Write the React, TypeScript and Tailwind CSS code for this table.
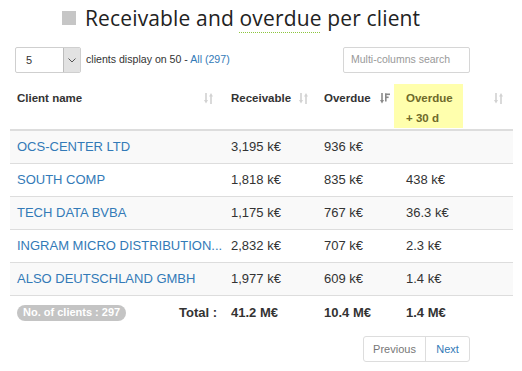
import React from 'react';

const rows = [
  { name: 'OCS-CENTER LTD', rec: '3,195 k€', over: '936 k€', over30: '' },
  { name: 'SOUTH COMP', rec: '1,818 k€', over: '835 k€', over30: '438 k€' },
  { name: 'TECH DATA BVBA', rec: '1,175 k€', over: '767 k€', over30: '36.3 k€' },
  { name: 'INGRAM MICRO DISTRIBUTION...', rec: '2,832 k€', over: '707 k€', over30: '2.3 k€' },
  { name: 'ALSO DEUTSCHLAND GMBH', rec: '1,977 k€', over: '609 k€', over30: '1.4 k€' },
];

// two arrows, down on the left and up on the right
const SortIcon = () => (
  <svg width="9" height="11" viewBox="0 0 9 11" className="mt-[5px] shrink-0">
    <g fill="#d2d2d2">
      <rect x="1.2" y="0" width="1.6" height="8" />
      <path d="M0 7 L4 7 L2 10.5 Z" />
      <rect x="6.2" y="2.5" width="1.6" height="8.5" />
      <path d="M5 3.5 L9 3.5 L7 0 Z" />
    </g>
  </svg>
);

const SortActiveIcon = () => (
  <svg width="10" height="11" viewBox="0 0 10 11" className="mt-[5px] shrink-0">
    <g fill="#8a8a8a">
      <rect x="1.2" y="0" width="1.6" height="8" />
      <path d="M0 7 L4 7 L2 10.5 Z" />
      <rect x="5" y="0.5" width="5" height="1.6" />
      <rect x="5" y="3.5" width="3.6" height="1.6" />
      <rect x="5" y="0.5" width="1.6" height="8" />
    </g>
  </svg>
);

const grid = 'grid grid-cols-[214px_93px_82px_114px]';

export default function App() {
  return (
    <div className="w-[522px] h-[371px] bg-white text-[#333] font-['Liberation_Sans',Arial,sans-serif] overflow-hidden">
      {/* title */}
      <div className="h-[36px] flex items-center pl-[62px] gap-[9px]">
        <div className="w-[14px] h-[14px] bg-[#c6c6c6]" />
        <h1 className="font-['Open_Sans',sans-serif] text-[21px] leading-none text-[#222] tracking-[0.15px]">
          Receivable and{' '}
          <span className="underline decoration-dotted decoration-[#8cc63f] decoration-1 underline-offset-[6px]">overdue</span> per client
        </h1>
      </div>

      {/* controls */}
      <div className="mt-[11px] flex items-center justify-between pl-[15px] w-[470px]">
        <div className="flex items-center">
          <div className="flex w-[66px] h-[26px] border border-[#cfcfcf] rounded-[2px] overflow-hidden">
            <div className="flex-1 flex items-center pl-[10px] text-[11px] text-[#333]">5</div>
            <div className="w-[17px] bg-[#e2e2e2] border-l border-[#bdbdbd] flex items-center justify-center">
              <svg width="8" height="5" viewBox="0 0 8 5">
                <path d="M0.5 0.5 L4 4 L7.5 0.5" fill="none" stroke="#555" strokeWidth="1" />
              </svg>
            </div>
          </div>
          <span className="ml-[5px] text-[10.6px] text-[#333]">
            clients display on 50 - <span className="text-[#337ab7]">All (297)</span>
          </span>
        </div>
        <div className="w-[127px] h-[26px] border border-[#d6d6d6] rounded-[2px] flex items-center pl-[7px] text-[10.5px] text-[#999]">
          Multi-columns search
        </div>
      </div>

      {/* table */}
      <div className="mt-[7px] ml-[10px] w-[503px]">
        <div className={`${grid} h-[51px] border-b-2 border-[#dddddd] text-[11.5px] font-bold leading-[20px]`}>
          <div className="flex justify-between items-start pt-[8px] pl-[7px] pr-[11px]">
            <span>Client name</span>
            <SortIcon />
          </div>
          <div className="flex justify-between items-start pt-[8px] pl-[7px] pr-[9px]">
            <span>Receivable</span>
            <SortIcon />
          </div>
          <div className="flex justify-between items-start pt-[8px] pl-[7px] pr-[9px]">
            <span>Overdue</span>
            <SortActiveIcon />
          </div>
          <div className="flex justify-between items-start pt-[4px] pr-[10px]">
            <div className="-ml-[5px] w-[69px] h-[44px] bg-[#ffffad] pt-[4px] pl-[12px] text-[#6e6a2a]">
              <div>Overdue</div>
              <div>+ 30 d</div>
            </div>
            <div className="pt-[4px]">
              <SortIcon />
            </div>
          </div>
        </div>

        {rows.map((r, i) => (
          <div
            key={r.name}
            className={`${grid} h-[33px] border-b border-[#dddddd] items-center text-[13px] ${i % 2 === 0 ? 'bg-[#f9f9f9]' : 'bg-white'}`}
          >
            <div className="pl-[7px] text-[#337ab7] whitespace-nowrap">{r.name}</div>
            <div className="pl-[7px]">{r.rec}</div>
            <div className="pl-[7px]">{r.over}</div>
            <div className="pl-[7px]">{r.over30}</div>
          </div>
        ))}

        <div className={`${grid} h-[33px] items-center text-[13px] font-bold`}>
          <div className="flex items-center justify-between pl-[7px] pr-[7px]">
            <span className="bg-[#c4c4c4] text-white text-[11px] rounded-full h-[16px] px-[6px] flex items-center">
              No. of clients : 297
            </span>
            <span>Total :</span>
          </div>
          <div className="pl-[7px]">41.2 M€</div>
          <div className="pl-[7px]">10.4 M€</div>
          <div className="pl-[7px]">1.4 M€</div>
        </div>
      </div>

      {/* pagination */}
      <div className="mt-[7px] w-[470px] flex justify-end">
        <div className="flex h-[26px] border border-[#dddddd] rounded-[3px] text-[11px]">
          <span className="w-[62px] flex items-center justify-center text-[#777] border-r border-[#dddddd]">Previous</span>
          <span className="w-[43px] flex items-center justify-center text-[#337ab7]">Next</span>
        </div>
      </div>
    </div>
  );
}
